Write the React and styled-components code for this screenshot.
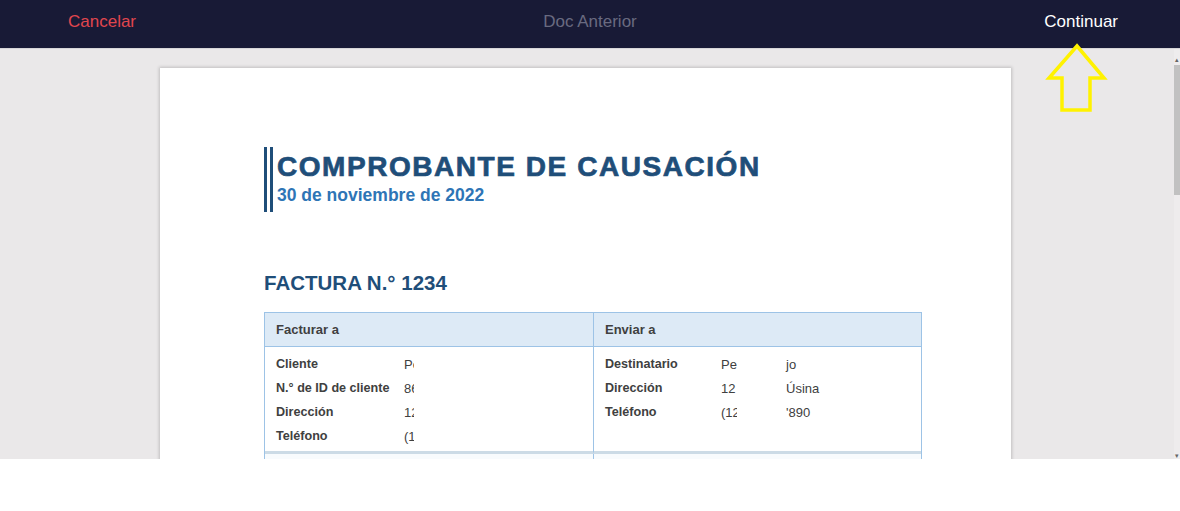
import React from 'react'
import styled, { createGlobalStyle } from 'styled-components'

const GlobalStyle = createGlobalStyle`
    html, body {
        margin: 0;
        padding: 0;
        background: #fff;
        font-family: "Liberation Sans", Arial, sans-serif;
    }
`

const billTo = [
    ['Cliente', 'Pe'],
    ['N.° de ID de cliente', '86'],
    ['Dirección', '12'],
    ['Teléfono', '(1'],
]

const shipTo = [
    ['Destinatario', 'Pe', 'jo'],
    ['Dirección', '12', 'Úsina'],
    ['Teléfono', '(12', "'890"],
]

export default function App() {
    return (
        <>
            <GlobalStyle />
            <Screen>
                <TopBar>
                    <NavButton tone="#e0464e">Cancelar</NavButton>
                    <NavButton tone="#696a80">Doc Anterior</NavButton>
                    <NavButton tone="#ffffff">Continuar</NavButton>
                    <Arrow width="64" height="72" viewBox="0 0 64 72">
                        <path
                            d="M32 3 L59 35 L45 35 L45 67 L17 67 L17 35 L4 35 Z"
                            fill="none"
                            stroke="#fff200"
                            strokeWidth="3.5"
                            strokeLinejoin="miter"
                        />
                    </Arrow>
                </TopBar>
                <Viewer>
                    <Canvas>
                        <Page>
                            <TitleBlock>
                                <Title>COMPROBANTE DE CAUSACIÓN</Title>
                                <DateLine>30 de noviembre de 2022</DateLine>
                            </TitleBlock>
                            <InvoiceNo>FACTURA N.° 1234</InvoiceNo>
                            <Table>
                                <HeadCell>Facturar a</HeadCell>
                                <HeadCell last>Enviar a</HeadCell>
                                <BodyCell>
                                    {billTo.map(([k, v]) => (
                                        <InfoRow key={k}>
                                            <Label w={128}>{k}</Label>
                                            <Clip w={10}>{v}</Clip>
                                        </InfoRow>
                                    ))}
                                </BodyCell>
                                <BodyCell last>
                                    {shipTo.map(([k, a, b]) => (
                                        <InfoRow key={k}>
                                            <Label w={116}>{k}</Label>
                                            <Clip w={16}>{a}</Clip>
                                            <Tail>{b}</Tail>
                                        </InfoRow>
                                    ))}
                                </BodyCell>
                                <NextCell />
                                <NextCell last />
                            </Table>
                        </Page>
                    </Canvas>
                    <Scrollbar>
                        <ScrollArrow>▴</ScrollArrow>
                        <Thumb />
                        <Spacer />
                        <ScrollArrow>▾</ScrollArrow>
                    </Scrollbar>
                </Viewer>
                <Footer />
            </Screen>
        </>
    )
}

const Screen = styled.div`
    width: 1180px;
    height: 511px;
    display: flex;
    flex-direction: column;
    overflow: hidden;
`

const TopBar = styled.header`
    position: relative;
    height: 48px;
    flex-shrink: 0;
    background: #181a36;
    display: grid;
    grid-template-columns: 140px 1fr 140px;
    align-items: center;
    padding: 0 62px 0 68px;
`

const NavButton = styled.span`
    font-size: 17px;
    color: ${(props) => props.tone};
    white-space: nowrap;
    margin-top: -4px;

    &:nth-child(2) {
        justify-self: center;
        margin-right: 6px;
    }

    &:nth-child(3) {
        justify-self: end;
    }
`

const Arrow = styled.svg`
    position: absolute;
    top: 43px;
    right: 71px;
    z-index: 2;
`

const Viewer = styled.div`
    height: 411px;
    flex-shrink: 0;
    display: flex;
    background: #eae8e9;
    border-top: 1px solid #d6d5d8;
    box-sizing: border-box;
    overflow: hidden;
`

const Canvas = styled.div`
    flex: 1;
    padding: 19px 0 0 160px;
`

const Page = styled.div`
    width: 851px;
    height: 420px;
    background: #fff;
    box-shadow: 0 0 3px 1px rgba(0, 0, 0, 0.18);
    padding: 79px 0 0 104px;
    box-sizing: border-box;
`

const TitleBlock = styled.div`
    border-left: 9px double #1f4e79;
    padding: 0 0 0 4px;
    height: 65px;
`

const Title = styled.h1`
    margin: 0;
    padding-top: 3px;
    font-size: 28px;
    line-height: 33px;
    font-weight: 700;
    letter-spacing: 1.55px;
    color: #1f4e79;
    -webkit-text-stroke: 0.7px #1f4e79;
`

const DateLine = styled.div`
    margin-top: 1px;
    font-size: 17.5px;
    font-weight: 700;
    color: #2e75b6;
    line-height: 22px;
`

const InvoiceNo = styled.h2`
    margin: 59px 0 0;
    font-size: 20.5px;
    line-height: 24px;
    font-weight: 700;
    color: #1f4e79;
`

const Table = styled.div`
    margin-top: 17px;
    width: 656px;
    display: grid;
    grid-template-columns: 329px 327px;
    border: 1px solid #9dc3e6;
    border-bottom: none;
`

const HeadCell = styled.div`
    height: 33px;
    line-height: 33px;
    padding-left: 11px;
    background: #ddeaf6;
    border-bottom: 1px solid #9dc3e6;
    border-right: ${(props) => (props.last ? 'none' : '1px solid #9dc3e6')};
    font-size: 13px;
    font-weight: 700;
    color: #404040;
`

const BodyCell = styled.div`
    height: 107px;
    padding: 5px 0 0 11px;
    box-sizing: border-box;
    border-right: ${(props) => (props.last ? 'none' : '1px solid #9dc3e6')};
    border-bottom: 3px solid #ccdbe6;
`

const NextCell = styled.div`
    height: 20px;
    background: #f8fbfd;
    border-right: ${(props) => (props.last ? 'none' : '1px solid #9dc3e6')};
`

const InfoRow = styled.div`
    display: flex;
    height: 24px;
    align-items: center;
    font-size: 13px;
    color: #404040;
`

const Label = styled.span`
    width: ${(props) => props.w}px;
    flex-shrink: 0;
    font-size: 12.6px;
    font-weight: 700;
    white-space: nowrap;
`

const Clip = styled.span`
    width: ${(props) => props.w}px;
    overflow: hidden;
    white-space: nowrap;
    margin-right: ${(props) => 65 - props.w}px;
`

const Tail = styled.span`
    white-space: nowrap;
`

const Scrollbar = styled.div`
    width: 6px;
    display: flex;
    flex-direction: column;
    align-items: center;
    padding-top: 8px;
    background: #eeeced;
`

const ScrollArrow = styled.span`
    font-size: 7px;
    line-height: 6px;
    color: #666;
`

const Thumb = styled.div`
    width: 6px;
    height: 130px;
    margin-top: 2px;
    background: #c1c1c1;
`

const Spacer = styled.div`
    flex: 1;
`

const Footer = styled.div`
    flex: 1;
    background: #fff;
`
